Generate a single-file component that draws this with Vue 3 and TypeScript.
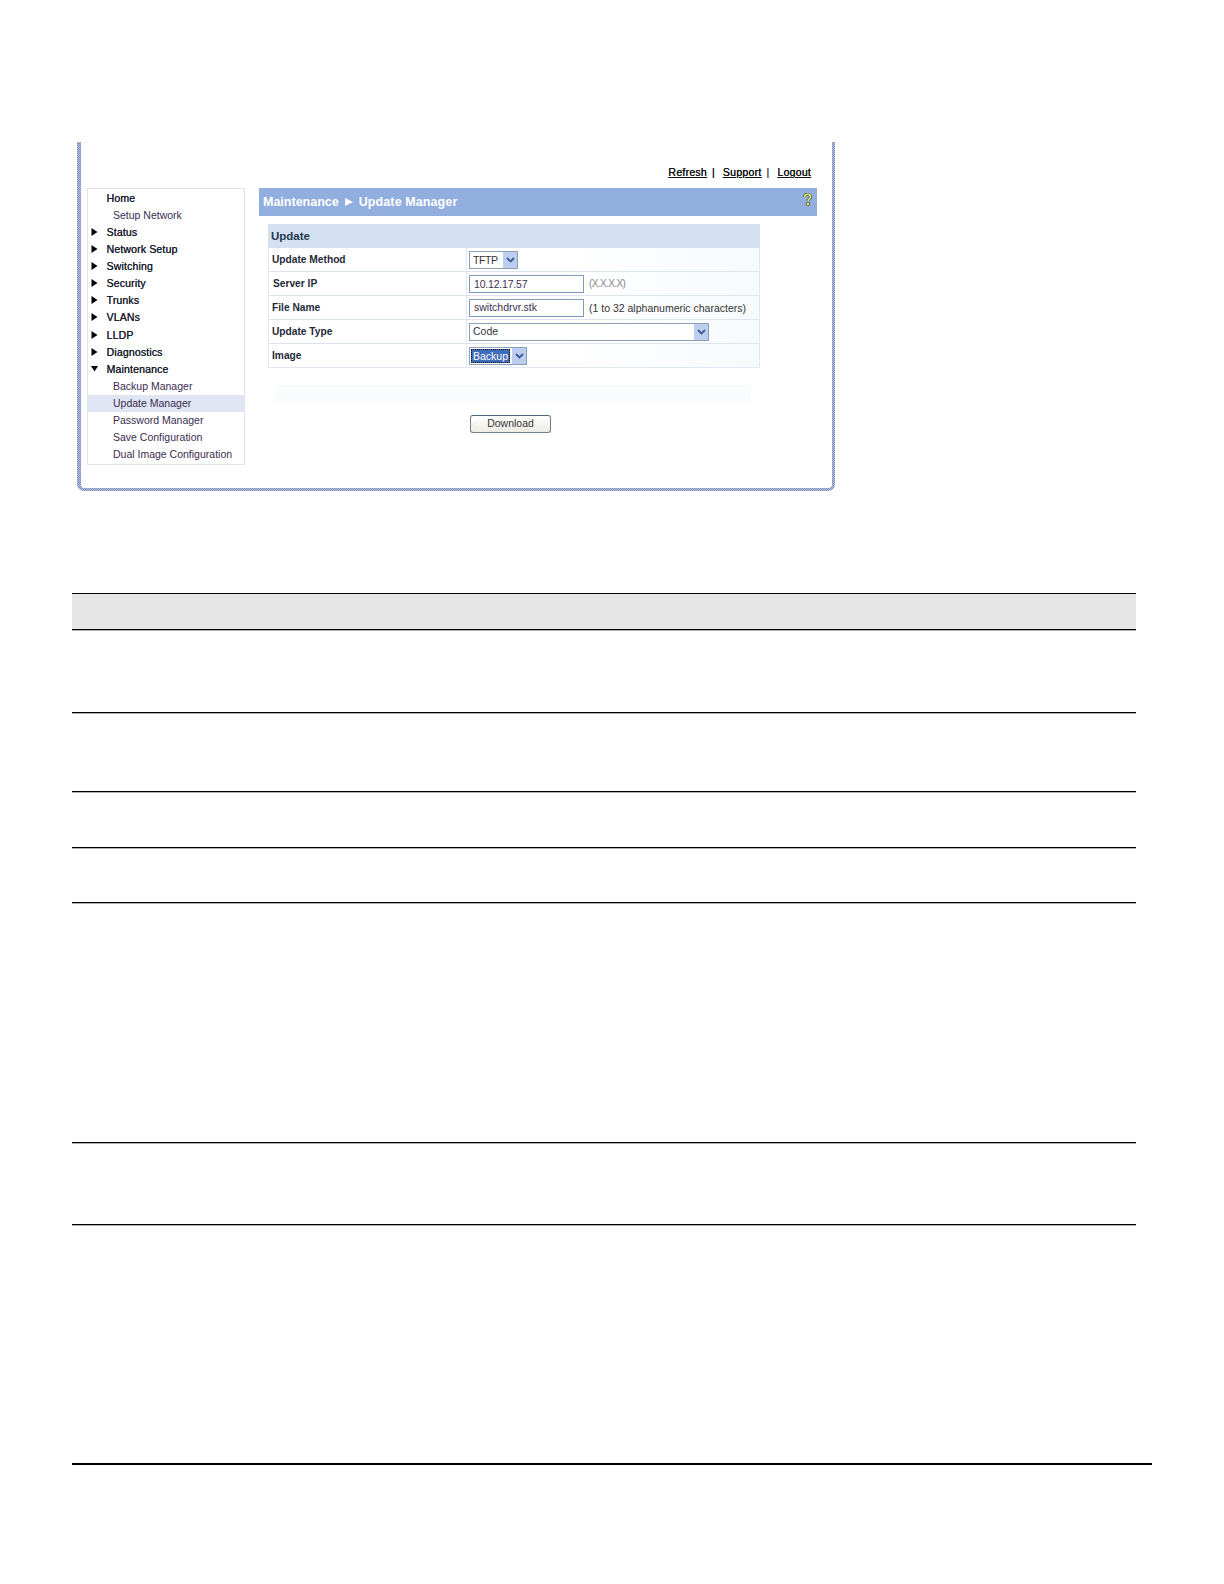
<script setup lang="ts">
interface NavItem { label: string; kind: 'top' | 'sub'; arrow?: 'right' | 'down'; active?: boolean }
const nav: NavItem[] = [
  { label: 'Home', kind: 'top' },
  { label: 'Setup Network', kind: 'sub' },
  { label: 'Status', kind: 'top', arrow: 'right' },
  { label: 'Network Setup', kind: 'top', arrow: 'right' },
  { label: 'Switching', kind: 'top', arrow: 'right' },
  { label: 'Security', kind: 'top', arrow: 'right' },
  { label: 'Trunks', kind: 'top', arrow: 'right' },
  { label: 'VLANs', kind: 'top', arrow: 'right' },
  { label: 'LLDP', kind: 'top', arrow: 'right' },
  { label: 'Diagnostics', kind: 'top', arrow: 'right' },
  { label: 'Maintenance', kind: 'top', arrow: 'down' },
  { label: 'Backup Manager', kind: 'sub' },
  { label: 'Update Manager', kind: 'sub', active: true },
  { label: 'Password Manager', kind: 'sub' },
  { label: 'Save Configuration', kind: 'sub' },
  { label: 'Dual Image Configuration', kind: 'sub' },
]
const ruleHeights: number[] = [83, 79, 56, 55, 240, 82]
</script>

<template>
  <div class="page">
    <div class="frame">
      <div class="toplinks">
        <a>Refresh</a><span class="sep">|</span>
        <a>Support</a><span class="sep light">|</span>
        <a>Logout</a>
      </div>
      <div class="columns">
        <nav class="side">
          <div v-for="n in nav" :key="n.label" class="nav" :class="[n.kind, { active: n.active }]">
            <svg v-if="n.arrow" class="arrow" width="7" height="8" viewBox="0 0 7 8">
              <path v-if="n.arrow === 'right'" d="M0.5 0 L6.5 4 L0.5 8 Z" fill="#000" />
              <path v-else d="M0 1 L7 1 L3.5 6.5 Z" fill="#000" />
            </svg>
            <span>{{ n.label }}</span>
          </div>
        </nav>
        <main class="main">
          <div class="banner">
            <span>Maintenance</span>
            <svg width="8" height="8" viewBox="0 0 8 8"><path d="M0 0 L8 4 L0 8 Z" fill="#fff" /></svg>
            <span class="crumb2">Update Manager</span>
            <svg class="help" width="9" height="13" viewBox="0 0 9 13">
              <path d="M1.6 4.2 C1.6 2.2 3 1.3 4.5 1.3 C6.2 1.3 7.5 2.5 7.5 4 C7.5 5.6 5.2 6 5 8.2" fill="none" stroke="#3f5f34" stroke-width="3" />
              <path d="M1.6 4.2 C1.6 2.2 3 1.3 4.5 1.3 C6.2 1.3 7.5 2.5 7.5 4 C7.5 5.6 5.2 6 5 8.2" fill="none" stroke="#eef27a" stroke-width="1.5" />
              <circle cx="4.9" cy="11" r="1.7" fill="#eef27a" stroke="#3f5f34" stroke-width="0.9" />
            </svg>
          </div>
          <div class="form">
            <div class="form-head">Update</div>
            <div class="row">
              <div class="label">Update Method</div>
              <div class="val">
                <div class="select tftp"><span class="sel-text">TFTP</span><span class="drop"><svg width="9" height="6" viewBox="0 0 9 6"><path d="M1 1 L4.5 4.5 L8 1" fill="none" stroke="#3c5a94" stroke-width="1.8" /></svg></span></div>
              </div>
            </div>
            <div class="row">
              <div class="label indent">Server IP</div>
              <div class="val"><div class="input tight">10.12.17.57</div><span class="hint muted">(X.X.X.X)</span></div>
            </div>
            <div class="row">
              <div class="label">File Name</div>
              <div class="val raised"><div class="input">switchdrvr.stk</div><span class="hint">(1 to 32 alphanumeric characters)</span></div>
            </div>
            <div class="row">
              <div class="label">Update Type</div>
              <div class="val">
                <div class="select code"><span class="sel-text lifted">Code</span><span class="drop"><svg width="9" height="6" viewBox="0 0 9 6"><path d="M1 1 L4.5 4.5 L8 1" fill="none" stroke="#3c5a94" stroke-width="1.8" /></svg></span></div>
              </div>
            </div>
            <div class="row">
              <div class="label">Image</div>
              <div class="val">
                <div class="select backup"><span class="sel-text picked">Backup</span><span class="drop"><svg width="9" height="6" viewBox="0 0 9 6"><path d="M1 1 L4.5 4.5 L8 1" fill="none" stroke="#3c5a94" stroke-width="1.8" /></svg></span></div>
              </div>
            </div>
          </div>
          <div class="strip"></div>
          <div class="actions"><button class="btn" type="button">Download</button></div>
        </main>
      </div>
    </div>

    <section class="doc-table">
      <div class="thead"></div>
      <div v-for="(h, i) in ruleHeights" :key="i" class="trow" :style="{ height: h + 'px' }"></div>
      <div class="tlast"></div>
    </section>
    <div class="foot-rule"></div>
  </div>
</template>

<style scoped>
.page {
  width: 1224px;
  height: 1584px;
  box-sizing: border-box;
  padding: 142px 0 0 77px;
  background: #fff;
  font-family: "Liberation Sans", Arial, sans-serif;
  overflow: hidden;
}
.frame {
  width: 758px;
  height: 349px;
  box-sizing: border-box;
  border-style: solid;
  border-color: transparent;
  border-width: 0 3px 3px 4px;
  border-radius: 0 0 7px 7px;
  background:
    linear-gradient(#fff, #fff) padding-box,
    repeating-conic-gradient(#7c90ba 0 25%, #b3c2df 0 50%) 0 0 / 2px 2px border-box;
  padding: 24px 0 0 6px;
}
.toplinks {
  display: flex;
  justify-content: flex-end;
  align-items: center;
  height: 12px;
  padding-right: 21px;
  font-size: 10.5px;
  letter-spacing: 0.25px;
  color: #111;
  text-shadow: 0.2px 0 0 #111;
}
.toplinks a { text-decoration: underline; }
.sep { margin: 0 8px 0 5px; }
.sep.light { color: #666; }
.columns {
  display: flex;
  margin-top: 10px;
  gap: 14px;
}
.side {
  width: 158px;
  height: 277px;
  box-sizing: border-box;
  border: 1px solid #e0e5ec;
  padding-top: 1px;
}
.nav {
  position: relative;
  height: 17.07px;
  line-height: 17px;
  font-size: 10.5px;
  white-space: nowrap;
}
.nav.top { padding-left: 18.5px; color: #1a2230; letter-spacing: 0.16px; text-shadow: 0.2px 0 0 #1a2230; }
.nav.sub { padding-left: 25px; color: #3a2c50; }
.nav.active { background: #dfe5f3; }
.arrow { position: absolute; left: 3px; top: 4px; }
.main { width: 558px; }
.banner {
  position: relative;
  height: 28px;
  background: #92aedf;
  display: flex;
  align-items: center;
  padding-left: 4px;
  gap: 6px;
  color: #fff;
  font-size: 12.5px;
  font-weight: 700;
}
.crumb2 { letter-spacing: 0.1px; }
.help { position: absolute; right: 5px; top: 5px; }
.form {
  margin: 8px 0 0 9px;
  width: 492px;
  box-sizing: border-box;
  border: 1px solid #e2e8f2;
  border-top: none;
}
.form-head {
  height: 24px;
  margin: 0 -1px;
  line-height: 24px;
  padding-left: 3px;
  background: #d3e1f3;
  font-size: 11.5px;
  font-weight: 700;
  color: #27384f;
}
.row {
  display: flex;
  height: 24px;
  box-sizing: border-box;
  border-bottom: 1px solid #dde4ee;
  background: linear-gradient(to right, #fff 60%, #f7fafd);
}
.row:last-child { border-bottom: none; height: 23px; }
.label {
  width: 198px;
  box-sizing: border-box;
  border-right: 1px solid #e2e8f2;
  padding-left: 3px;
  line-height: 23px;
  font-size: 10.2px;
  font-weight: 700;
  color: #1e2a3a;
}
.label.indent { padding-left: 4px; }
.val {
  display: flex;
  align-items: center;
  padding-left: 2px;
  font-size: 10.5px;
  color: #333;
}
.val.raised { line-height: 14px; }
.val.raised .input { line-height: 14px; }
.select {
  display: flex;
  align-items: center;
  justify-content: space-between;
  height: 18px;
  box-sizing: border-box;
  border: 1px solid #8aa0b8;
  background: #fff;
  padding: 0 0 0 3px;
}
.select.tftp { width: 49px; letter-spacing: -0.4px; }
.select.code { width: 240px; }
.select.backup { width: 58px; padding-left: 1px; }
.lifted { padding-bottom: 1px; }
.drop {
  width: 14px;
  height: 16px;
  display: flex;
  align-items: center;
  justify-content: center;
  background: #bccdf0;
}
.picked {
  background: #3f6bbd;
  color: #fff;
  outline: 1px dotted #111;
  outline-offset: -1px;
  padding: 0 2px;
  height: 14px;
  line-height: 14px;
}
.input {
  width: 115px;
  height: 18px;
  box-sizing: border-box;
  border: 1px solid #7f9db9;
  line-height: 16px;
  padding-left: 4px;
  color: #3a3350;
  background: #fff;
}
.input.tight { letter-spacing: -0.2px; }
.hint { margin-left: 5px; color: #333; }
.hint.muted { color: #888; font-size: 10px; letter-spacing: -0.6px; }
.strip {
  margin: 17px 0 0 16px;
  width: 476px;
  height: 18px;
  background: #fafbfd;
}
.actions { margin-top: 12px; padding-left: 211px; }
.btn {
  display: block;
  width: 81px;
  height: 18px;
  padding: 0 0 2px;
  border: 1px solid #708090;
  border-top-color: #4a6a80;
  border-radius: 3px;
  background: linear-gradient(#fff, #ecebe4);
  font-family: inherit;
  font-size: 10.5px;
  color: #333;
}
.doc-table {
  margin: 102px 0 0 -5px;
  width: 1064px;
}
.thead {
  height: 37px;
  box-sizing: border-box;
  background: #e6e6e6;
  border-top: 1px solid #000;
  border-bottom: 1px solid #000;
  box-shadow: 0 1px 0 #b0b0b0;
}
.trow {
  box-sizing: border-box;
  border-bottom: 1px solid #000;
  box-shadow: 0 1px 0 #b0b0b0;
}
.tlast { height: 238px; }
.foot-rule {
  width: 1080px;
  height: 2px;
  margin-left: -5px;
  background: #000;
}
</style>
